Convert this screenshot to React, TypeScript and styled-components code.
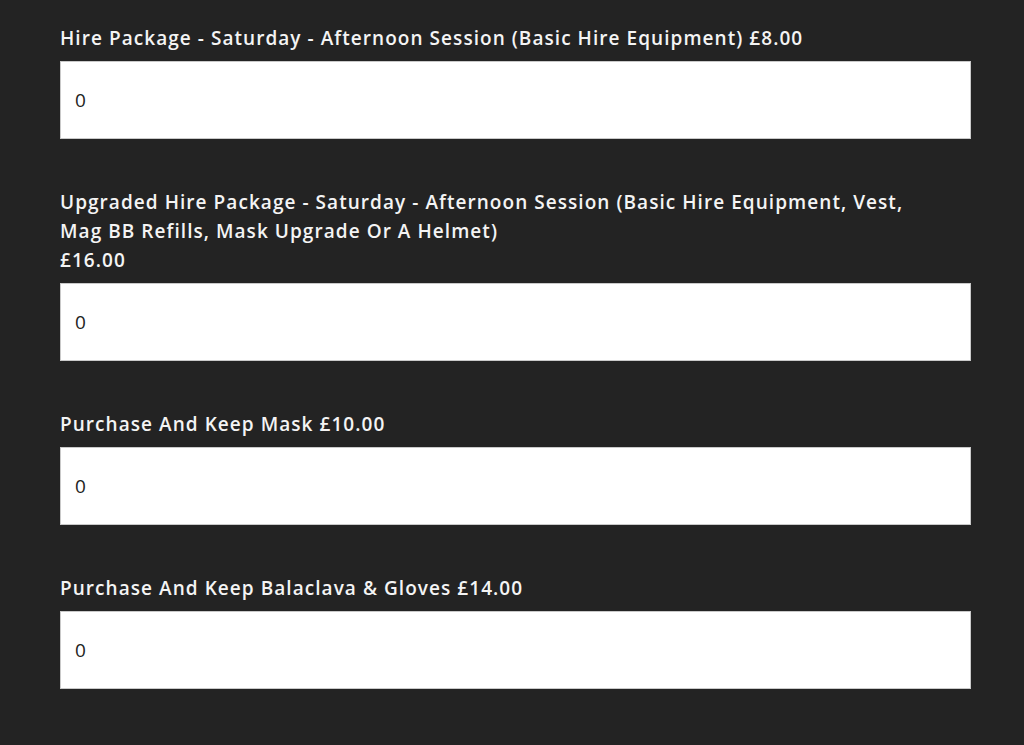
import React from "react";
import styled, { createGlobalStyle } from "styled-components";

const GlobalStyle = createGlobalStyle`
  html, body {
    margin: 0;
    padding: 0;
    background: #232323;
  }
`;

const Page = styled.div`
  min-height: 745px;
  background: #232323;
  padding: 24px 53px 40px 60px;
  box-sizing: border-box;
  font-family: "Open Sans", "Liberation Sans", sans-serif;
`;

const Form = styled.div`
  display: flex;
  flex-direction: column;
  gap: 49px;
  width: 911px;
`;

const Field = styled.div`
  display: flex;
  flex-direction: column;
  gap: 8px;
`;

const Label = styled.label`
  color: #f4f4f4;
  font-size: 19px;
  font-weight: 600;
  line-height: 29px;
  letter-spacing: 1.05px;
`;

const Input = styled.input`
  box-sizing: border-box;
  width: 100%;
  height: 78px;
  padding: 0 14px;
  background: #fff;
  border: 1px solid #c9c9c9;
  border-radius: 0;
  color: #222;
  font-family: "Open Sans", "Liberation Sans", sans-serif;
  font-size: 19px;
  outline: none;
`;

interface Item {
  id: string;
  label: React.ReactNode;
}

const ITEMS: Item[] = [
  {
    id: "hire",
    label: "Hire Package - Saturday - Afternoon Session (Basic Hire Equipment) £8.00",
  },
  {
    id: "upgraded",
    label: (
      <>
        Upgraded Hire Package - Saturday - Afternoon Session (Basic Hire Equipment, Vest,
        <br />
        Mag BB Refills, Mask Upgrade Or A Helmet)
        <br />
        £16.00
      </>
    ),
  },
  { id: "mask", label: "Purchase And Keep Mask £10.00" },
  { id: "balaclava", label: "Purchase And Keep Balaclava & Gloves £14.00" },
];

export default function App() {
  return (
    <>
      <GlobalStyle />
      <Page>
        <Form>
          {ITEMS.map((item) => (
            <Field key={item.id}>
              <Label htmlFor={item.id}>{item.label}</Label>
              <Input id={item.id} type="text" defaultValue="0" readOnly />
            </Field>
          ))}
        </Form>
      </Page>
    </>
  );
}
